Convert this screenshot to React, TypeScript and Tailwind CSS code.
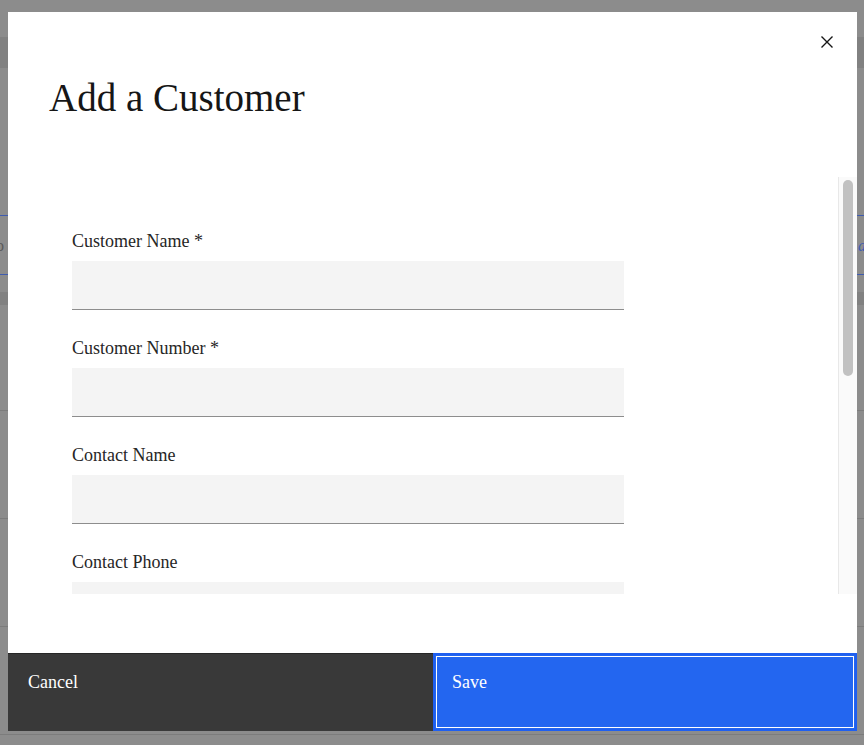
import React from "react";

const fields = ["Customer Name *", "Customer Number *", "Contact Name", "Contact Phone", "Contact Email"];

export default function App() {
  return (
    <div
      className="relative h-[745px] w-[864px] overflow-hidden bg-[#8c8c8c]"
      style={{ fontFamily: '"Liberation Serif", "Times New Roman", serif' }}
    >
      {/* underlying page, dimmed */}
      <div className="flex flex-col">
        <div className="h-[37px]" />
        <div className="h-[31px] bg-[#818181]" />
        <div className="h-[147px]" />
        <div className="relative h-[60px] border-y border-[#3f5cb0]">
          <span className="absolute left-[-4px] top-[18px] text-[16px] text-[#5a5a5a]">o</span>
          <span className="absolute right-[-2px] top-[18px] text-[16px] italic text-[#3f5cb0]">a</span>
        </div>
        <div className="h-[17px]" />
        <div className="h-[13px] bg-[#818181]" />
        <div className="h-[106px] border-b border-[#7c7c7c]" />
        <div className="h-[108px] border-b border-[#7c7c7c]" />
        <div className="h-[108px] border-b border-[#7c7c7c]" />
        <div className="h-[108px] border-b border-[#7c7c7c]" />
      </div>

      {/* modal */}
      <div className="absolute left-[8px] top-[12px] flex h-[719px] w-[849px] flex-col bg-white">
        <div className="relative h-[165px] shrink-0">
          <h1 className="absolute left-[41px] top-[62px] text-[39px] leading-[47px] text-[#161616]">
            Add a Customer
          </h1>
          <div className="absolute left-[811px] top-[22px] flex h-[16px] w-[16px] items-center justify-center">
            <svg width="14" height="14" viewBox="0 0 14 14" fill="none" stroke="#161616" strokeWidth="1.4">
              <path d="M1.5 1.5 L12.5 12.5 M12.5 1.5 L1.5 12.5" />
            </svg>
          </div>
        </div>

        <div className="flex h-[417px] shrink-0">
          <div className="flex-1 overflow-hidden pl-[64px] pt-[52px]">
            <div className="flex flex-col gap-[26px]">
              {fields.map((f) => (
                <div key={f} className="flex flex-col gap-[8px]">
                  <div className="text-[18px] leading-[24px] text-[#262626]">{f}</div>
                  <div className="h-[49px] w-[552px] border-b border-[#8d8d8d] bg-[#f4f4f4]" />
                </div>
              ))}
            </div>
          </div>
          <div className="flex w-[19px] shrink-0 justify-center border-l border-[#e8e8e8] bg-[#fafafa] pt-[3px]">
            <div className="h-[196px] w-[10px] rounded-full bg-[#c1c1c1]" />
          </div>
        </div>

        <div className="flex-1" />

        <div className="flex h-[78px] shrink-0">
          <div className="w-[425px] shrink-0 border-t border-[#262626] bg-[#393939] pl-[20px] pt-[16px]">
            <span className="text-[18px] leading-[24px] text-white">Cancel</span>
          </div>
          <div className="w-[424px] shrink-0 border-2 border-[#1f5ff0] bg-[#2366f0] p-[1px]">
            <div className="h-full w-full border border-white pl-[15px] pt-[13px]">
              <span className="text-[18px] leading-[24px] text-white">Save</span>
            </div>
          </div>
        </div>
      </div>
    </div>
  );
}
